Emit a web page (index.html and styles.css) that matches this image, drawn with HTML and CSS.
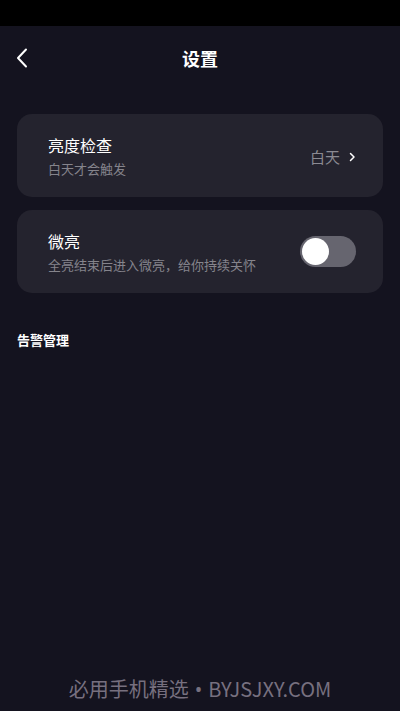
FILE: index.html
```html
<!DOCTYPE html>
<html lang="zh">
<head>
  <meta charset="UTF-8">
  <title>设置</title>
  <link rel="stylesheet" href="styles.css">
</head>
<body>
  <div class="statusbar"></div>
  <div class="header">
    <svg class="back" width="12" height="20" viewBox="0 0 12 20">
      <path d="M10 1.5 L2 10 L10 18.5" fill="none" stroke="#fff" stroke-width="2" stroke-linecap="round" stroke-linejoin="round"/>
    </svg>
    <h1>设置</h1>
  </div>

  <div class="list">
    <div class="card">
      <div class="info">
        <div class="title">亮度检查</div>
        <div class="desc">白天才会触发</div>
      </div>
      <div class="value">
        白天
        <svg width="7" height="10" viewBox="0 0 7 10">
          <path d="M1.5 1.5 L5 5 L1.5 8.5" fill="none" stroke="#fff" stroke-width="1.5" stroke-linecap="round" stroke-linejoin="round"/>
        </svg>
      </div>
    </div>

    <div class="card">
      <div class="info">
        <div class="title">微亮</div>
        <div class="desc">全亮结束后进入微亮，给你持续关怀</div>
      </div>
      <div class="toggle"><div class="knob"></div></div>
    </div>
  </div>

  <div class="section">告警管理</div>

  <div class="footer">必用手机精选<span class="dot">•</span>BYJSJXY.COM</div>
</body>
</html>
```

FILE: styles.css
```css
body {
  margin: 0;
  height: 711px;
  background: #14131f;
  font-family: "Noto Sans CJK SC", "Noto Sans", sans-serif;
  color: #fff;
  position: relative;
  overflow: hidden;
}
.statusbar {
  height: 26px;
  background: #000;
}
.header {
  height: 64px;
  display: flex;
  align-items: center;
  justify-content: center;
  position: relative;
}
.back {
  position: absolute;
  left: 16px;
  top: 22px;
}
.header h1 {
  margin: 0;
  font-size: 18px;
  font-weight: bold;
}
.list {
  padding: 24px 17px 0;
  display: flex;
  flex-direction: column;
  gap: 13px;
}
.card {
  background: #24232e;
  border-radius: 15px;
  height: 83px;
  padding: 0 27px 0 31px;
  box-sizing: border-box;
  display: flex;
  align-items: center;
  justify-content: space-between;
}
.title {
  font-size: 16px;
  line-height: 22px;
}
.desc {
  font-size: 13px;
  line-height: 18px;
  margin-top: 4px;
  color: #85848c;
}
.value {
  display: flex;
  align-items: center;
  gap: 9px;
  font-size: 15px;
  color: #8b8a92;
  margin-top: 2px;
}
.toggle {
  width: 56px;
  height: 31px;
  border-radius: 16px;
  background: #66656f;
  padding: 2px;
  box-sizing: border-box;
}
.knob {
  width: 27px;
  height: 27px;
  border-radius: 50%;
  background: #fff;
}
.section {
  padding: 37px 17px 0;
  font-size: 13px;
  font-weight: bold;
}
.footer {
  position: absolute;
  left: 0;
  right: 0;
  bottom: 8px;
  text-align: center;
  font-size: 20px;
  color: #77707f;
}
.dot {
  font-family: "Noto Sans", sans-serif;
  margin: 0 6px;
}
```
